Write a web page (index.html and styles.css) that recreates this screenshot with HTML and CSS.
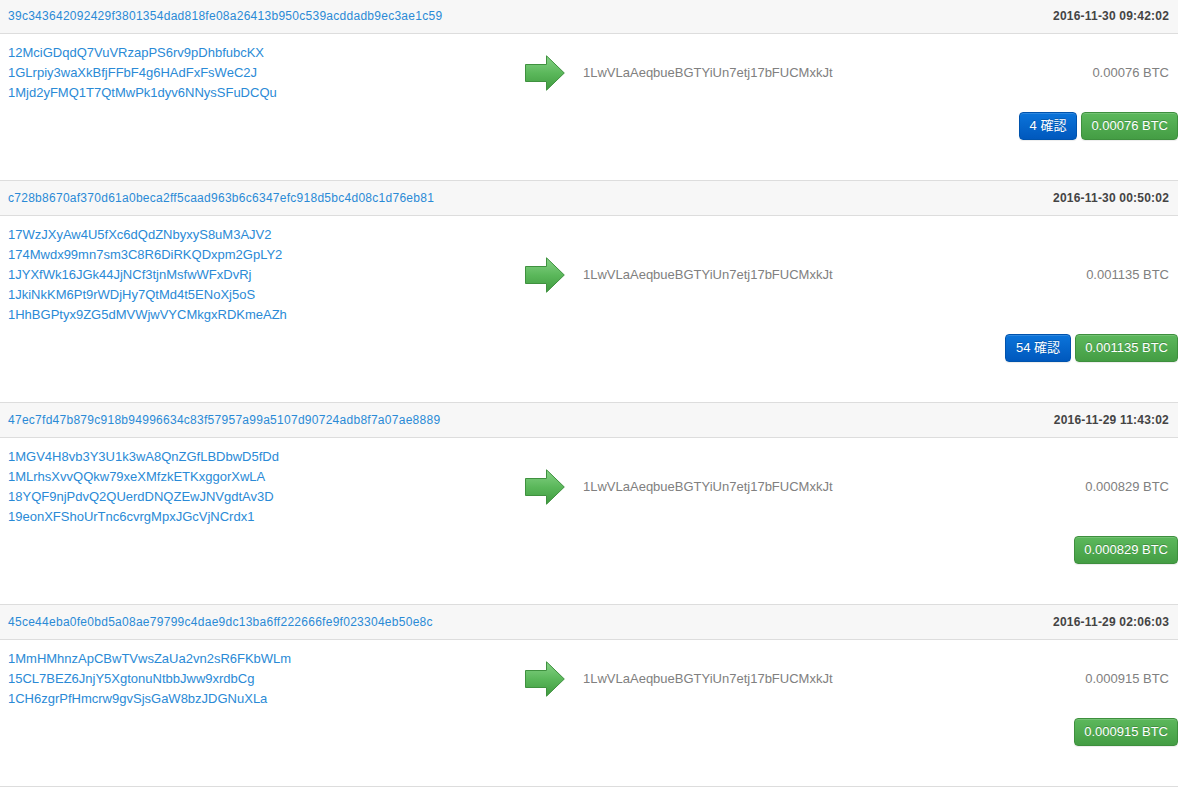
FILE: index.html
```html
<!DOCTYPE html>
<html lang="ja">
<head>
<meta charset="utf-8">
<title>Transactions</title>
<link rel="stylesheet" href="styles.css">
</head>
<body>
<svg class="defs" width="0" height="0" aria-hidden="true">
  <defs>
    <linearGradient id="arrowGrad" x1="0" y1="0" x2="0" y2="1">
      <stop offset="0" stop-color="#86d286"/>
      <stop offset="0.5" stop-color="#5bb85b"/>
      <stop offset="1" stop-color="#3f9a3f"/>
    </linearGradient>
    <symbol id="arrow" viewBox="0 0 40 36">
      <path d="M0.5 9.5 H21.5 V0.8 L39.3 18 L21.5 35.2 V26.5 H0.5 Z" fill="url(#arrowGrad)" stroke="#3f913f" stroke-width="1" stroke-linejoin="miter"/>
    </symbol>
  </defs>
</svg>

<div class="txlist">

  <div class="tx">
    <div class="tx-head">
      <a class="hash" href="#">39c343642092429f3801354dad818fe08a26413b950c539acddadb9ec3ae1c59</a>
      <span class="time">2016-11-30 09:42:02</span>
    </div>
    <div class="tx-row">
      <div class="inputs">
        <a href="#">12MciGDqdQ7VuVRzapPS6rv9pDhbfubcKX</a>
        <a href="#">1GLrpiy3waXkBfjFFbF4g6HAdFxFsWeC2J</a>
        <a href="#">1Mjd2yFMQ1T7QtMwPk1dyv6NNysSFuDCQu</a>
      </div>
      <div class="arrow"><svg width="40" height="36"><use href="#arrow"/></svg></div>
      <div class="output">1LwVLaAeqbueBGTYiUn7etj17bFUCMxkJt</div>
      <div class="amount">0.00076 BTC</div>
    </div>
    <div class="tx-foot">
      <span class="btn btn-blue">4 確認</span>
      <span class="btn btn-green">0.00076 BTC</span>
    </div>
  </div>

  <div class="tx">
    <div class="tx-head">
      <a class="hash" href="#">c728b8670af370d61a0beca2ff5caad963b6c6347efc918d5bc4d08c1d76eb81</a>
      <span class="time">2016-11-30 00:50:02</span>
    </div>
    <div class="tx-row">
      <div class="inputs">
        <a href="#">17WzJXyAw4U5fXc6dQdZNbyxyS8uM3AJV2</a>
        <a href="#">174Mwdx99mn7sm3C8R6DiRKQDxpm2GpLY2</a>
        <a href="#">1JYXfWk16JGk44JjNCf3tjnMsfwWFxDvRj</a>
        <a href="#">1JkiNkKM6Pt9rWDjHy7QtMd4t5ENoXj5oS</a>
        <a href="#">1HhBGPtyx9ZG5dMVWjwVYCMkgxRDKmeAZh</a>
      </div>
      <div class="arrow"><svg width="40" height="36"><use href="#arrow"/></svg></div>
      <div class="output">1LwVLaAeqbueBGTYiUn7etj17bFUCMxkJt</div>
      <div class="amount">0.001135 BTC</div>
    </div>
    <div class="tx-foot">
      <span class="btn btn-blue">54 確認</span>
      <span class="btn btn-green">0.001135 BTC</span>
    </div>
  </div>

  <div class="tx">
    <div class="tx-head">
      <a class="hash" href="#">47ec7fd47b879c918b94996634c83f57957a99a5107d90724adb8f7a07ae8889</a>
      <span class="time">2016-11-29 11:43:02</span>
    </div>
    <div class="tx-row">
      <div class="inputs">
        <a href="#">1MGV4H8vb3Y3U1k3wA8QnZGfLBDbwD5fDd</a>
        <a href="#">1MLrhsXvvQQkw79xeXMfzkETKxggorXwLA</a>
        <a href="#">18YQF9njPdvQ2QUerdDNQZEwJNVgdtAv3D</a>
        <a href="#">19eonXFShoUrTnc6cvrgMpxJGcVjNCrdx1</a>
      </div>
      <div class="arrow"><svg width="40" height="36"><use href="#arrow"/></svg></div>
      <div class="output">1LwVLaAeqbueBGTYiUn7etj17bFUCMxkJt</div>
      <div class="amount">0.000829 BTC</div>
    </div>
    <div class="tx-foot">
      <span class="btn btn-green">0.000829 BTC</span>
    </div>
  </div>

  <div class="tx">
    <div class="tx-head">
      <a class="hash" href="#">45ce44eba0fe0bd5a08ae79799c4dae9dc13ba6ff222666fe9f023304eb50e8c</a>
      <span class="time">2016-11-29 02:06:03</span>
    </div>
    <div class="tx-row">
      <div class="inputs">
        <a href="#">1MmHMhnzApCBwTVwsZaUa2vn2sR6FKbWLm</a>
        <a href="#">15CL7BEZ6JnjY5XgtonuNtbbJww9xrdbCg</a>
        <a href="#">1CH6zgrPfHmcrw9gvSjsGaW8bzJDGNuXLa</a>
      </div>
      <div class="arrow"><svg width="40" height="36"><use href="#arrow"/></svg></div>
      <div class="output">1LwVLaAeqbueBGTYiUn7etj17bFUCMxkJt</div>
      <div class="amount">0.000915 BTC</div>
    </div>
    <div class="tx-foot">
      <span class="btn btn-green">0.000915 BTC</span>
    </div>
  </div>

</div>
</body>
</html>
```

FILE: styles.css
```css
html, body {
  margin: 0;
  padding: 0;
  background: #ffffff;
}

body {
  font-family: "Liberation Sans", Arial, "Noto Sans CJK JP", sans-serif;
  font-size: 13px;
  color: #333333;
  overflow: hidden;
}

.defs {
  position: absolute;
  width: 0;
  height: 0;
}

.txlist {
  margin-top: -2px;
  border-bottom: 1px solid #dddddd;
}

.tx-head {
  display: flex;
  justify-content: space-between;
  align-items: center;
  height: 34px;
  padding: 0 9px 0 8px;
  background: #f7f7f7;
  border-top: 1px solid #dddddd;
  border-bottom: 1px solid #dddddd;
}

.hash {
  font-size: 12px;
  letter-spacing: 0.27px;
  color: #2a8ad6;
  text-decoration: none;
}

.time {
  font-size: 12px;
  font-weight: bold;
  color: #444444;
  letter-spacing: 0.2px;
}

.tx-row {
  display: grid;
  grid-template-columns: 517px 58px 1fr auto;
  align-items: center;
  padding: 9px 9px 0 8px;
}

.inputs {
  display: flex;
  flex-direction: column;
}

.inputs a {
  display: block;
  line-height: 20px;
  color: #2a8ad6;
  text-decoration: none;
}

.arrow {
  display: flex;
  align-items: center;
}

.arrow svg {
  display: block;
}

.output,
.amount {
  color: #808080;
  line-height: 20px;
}

.amount {
  text-align: right;
}

.tx-foot {
  display: flex;
  justify-content: flex-end;
  gap: 4px;
  margin: 9px 0 40px;
}

.btn {
  display: inline-block;
  padding: 4px 9px;
  line-height: 18px;
  font-size: 13px;
  color: #ffffff;
  border-radius: 4px;
  border: 1px solid transparent;
  text-shadow: 0 -1px 0 rgba(0, 0, 0, 0.2);
  box-shadow: inset 0 1px 0 rgba(255, 255, 255, 0.15), 0 1px 1px rgba(0, 0, 0, 0.075);
}

.btn-blue {
  padding: 4px 10px;
  background: linear-gradient(to bottom, #0b74da 0%, #0058bd 100%);
  border-color: #0053ad;
}

.btn-green {
  background: linear-gradient(to bottom, #5cb85c 0%, #449d44 100%);
  border-color: #3e8f3e;
}
```
